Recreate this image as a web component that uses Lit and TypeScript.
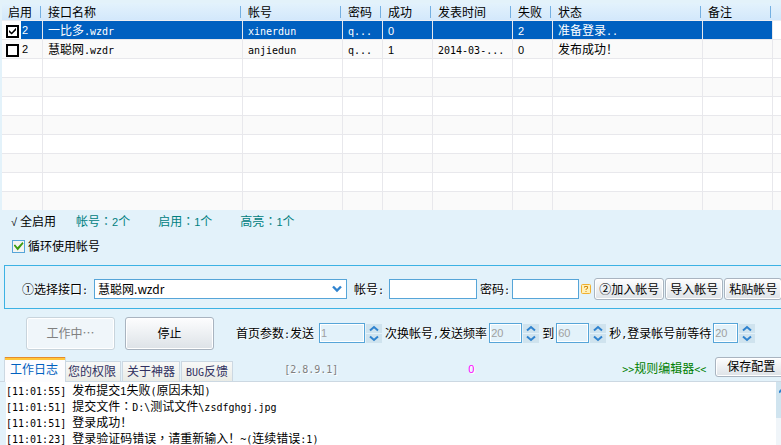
import { LitElement, html, css, svg } from "lit";
import { customElement, property } from "lit/decorators.js";

const textStyles = css`
  .latin {
    font-family: "DejaVu Sans Mono", "Liberation Mono", monospace;
    font-size: 10px;
    line-height: 10px;
  }
  .digits {
    font-family: "Liberation Sans", Arial, sans-serif;
    font-size: 11px;
    line-height: 10px;
  }
  .wide {
    font-family: "Noto Sans CJK TC", sans-serif;
    line-height: 10px;
  }
`;

/** Splits mixed text so that half-width runs take a half-em wide face. */
function mixed(text: string) {
  const runs = text.match(/[\x20-\x7e]+|[：，]+|[^\x20-\x7e：，]+/g) ?? [];
  return runs.map((run) => {
    if (/^\d+$/.test(run)) return html`<span class="digits">${run}</span>`;
    if (/^[\x20-\x7e]/.test(run)) return html`<span class="latin">${run}</span>`;
    if (/^[：，]/.test(run)) return html`<span class="wide">${run}</span>`;
    return html`${run}`;
  });
}

interface Account {
  on: boolean;
  cells: string[];
}

const columns = ["启用", "接口名称", "帐号", "密码", "成功", "发表时间", "失败", "状态", "备注", ""];
const accounts: Account[] = [
  { on: true, cells: ["一比多.wzdr", "xinerdun", "q...", "0", "", "2", "准备登录..", "", ""] },
  { on: false, cells: ["慧聪网.wzdr", "anjiedun", "q...", "1", "2014-03-...", "0", "发布成功！", "", ""] },
];
const emptyRows = Array.from({ length: 8 });
const logLines = [
  "[11:01:55] 发布提交1失败(原因未知)",
  "[11:01:51] 提交文件：D:\\测试文件\\zsdfghgj.jpg",
  "[11:01:51] 登录成功！",
  "[11:01:23] 登录验证码错误，请重新输入！~(连续错误:1)",
];

@customElement("account-table")
export class AccountTable extends LitElement {
  static styles = [
    textStyles,
    css`
      :host {
        display: block;
      }
      .grid {
        width: 100%;
        table-layout: fixed;
        border-collapse: separate;
        border-spacing: 0;
      }
      .w-check { width: 41px; }
      .w-name { width: 200px; }
      .w-user { width: 100px; }
      .w-narrow { width: 40px; }
      .w-ok { width: 50px; }
      .w-time { width: 80px; }
      .w-state { width: 150px; }
      .w-note { width: 70px; }
      th,
      td {
        box-sizing: border-box;
        padding: 0 0 0 5px;
        text-align: left;
        font-weight: 400;
        white-space: nowrap;
        overflow: hidden;
      }
      th {
        height: 18px;
        line-height: 16px;
        border-bottom: 1px solid #eceef2;
        background:
          linear-gradient(#74b0e2, #74b0e2) right 2px center / 1px 12px no-repeat,
          linear-gradient(#e3f2fc, #d3e8fb);
      }
      th:first-child {
        padding-left: 6px;
      }
      th:last-child {
        background: linear-gradient(#e3f2fc, #d3e8fb);
      }
      td {
        height: 19px;
        line-height: 18px;
        border-right: 1px solid #e8e8ec;
        border-bottom: 1px solid #e8e8ec;
        background: #fff;
      }
      tr:nth-child(even) td {
        background: #fafafa;
      }
      tr:last-child td {
        height: 18px;
        border-bottom: 0;
      }
      td:last-child {
        border-right: 0;
      }
      .picked td {
        background: #0060c0;
        color: #fff;
      }
      .picked td:first-child {
        background: linear-gradient(90deg, #fff 19px, #0060c0 19px);
      }
      .picked td:last-child {
        background: #fff;
      }
      .enable {
        display: flex;
        align-items: center;
        gap: 3px;
        height: 18px;
        margin-left: -1px;
      }
      .tick {
        appearance: none;
        box-sizing: border-box;
        width: 13px;
        height: 13px;
        margin: 2px 0 0;
        border: 2px solid #000;
        background: #fff;
        display: grid;
        place-items: center;
      }
      .tick:checked::before {
        content: "";
        width: 7px;
        height: 7px;
        background: #000;
        clip-path: polygon(0 35%, 38% 70%, 100% 5%, 100% 38%, 38% 100%, 0 68%);
      }
    `,
  ];

  render() {
    return html`
      <table class="grid">
        <colgroup>
          <col class="w-check" /><col class="w-name" /><col class="w-user" />
          <col class="w-narrow" /><col class="w-ok" /><col class="w-time" />
          <col class="w-narrow" /><col class="w-state" /><col class="w-note" /><col />
        </colgroup>
        <thead>
          <tr>${columns.map((c) => html`<th scope="col">${c}</th>`)}</tr>
        </thead>
        <tbody>
          ${accounts.map(
            (a, i) => html`
              <tr class=${i === 0 ? "picked" : ""}>
                <td>
                  <label class="enable">
                    <input class="tick" type="checkbox" .checked=${a.on} />${mixed("2")}
                  </label>
                </td>
                ${a.cells.map((c) => html`<td>${mixed(c)}</td>`)}
              </tr>
            `
          )}
          ${emptyRows.map(() => html`<tr>${columns.map(() => html`<td></td>`)}</tr>`)}
        </tbody>
      </table>
    `;
  }
}

@customElement("number-box")
export class NumberBox extends LitElement {
  @property() value = "";
  @property() label = "";
  @property() size = "medium";

  static styles = css`
    :host {
      display: flex;
      flex: none;
      align-items: center;
      gap: 1px;
    }
    .box {
      appearance: textfield;
      box-sizing: border-box;
      height: 20px;
      margin: 0;
      padding: 0 1px;
      border: 1px solid #56a5d8;
      border-radius: 0;
      box-shadow: inset 0 0 0 1px #fff;
      background: #e3f2fa;
      color: #a0a0a0;
      font: 11px "Liberation Sans", Arial, sans-serif;
    }
    .box::-webkit-inner-spin-button {
      display: none;
    }
    .large { width: 46px; }
    .medium { width: 33px; }
    .small { width: 25px; }
    .steps {
      display: grid;
      gap: 1px;
    }
    .step {
      display: grid;
      place-items: center;
      width: 16px;
      height: 9px;
      padding: 0;
      border: 0;
      background: #cfe3ee;
    }
  `;

  render() {
    return html`
      <input class="box ${this.size}" type="number" disabled aria-label=${this.label} .value=${this.value} />
      <span class="steps">
        <button class="step" aria-label="增加">
          <svg width="10" height="7" viewBox="0 0 10 7">
            ${svg`<path d="M1 5.5 5 2 9 5.5" fill="none" stroke="#2f83cf" stroke-width="2" />`}
          </svg>
        </button>
        <button class="step" aria-label="减少">
          <svg width="10" height="7" viewBox="0 0 10 7">
            ${svg`<path d="M1 1.5 5 5 9 1.5" fill="none" stroke="#2f83cf" stroke-width="2" />`}
          </svg>
        </button>
      </span>
    `;
  }
}

@customElement("app-root")
export class AppRoot extends LitElement {
  static styles = [
    textStyles,
    css`
      :host {
        display: flex;
        flex-direction: column;
        box-sizing: border-box;
        height: 100vh;
        padding-top: 3px;
        overflow: hidden;
        background: #e3f2fa;
        color: #000;
        font: 12px/16px "Noto Sans CJK SC", sans-serif;
        white-space: nowrap;
      }
      account-table {
        flex: none;
        margin-left: 2px;
      }
      .row {
        display: flex;
        flex: none;
        align-items: center;
      }
      .row > * {
        flex: none;
      }
      .shade {
        text-shadow: 1px 1px 0 #fff;
      }
      .stats {
        height: 22px;
        padding-left: 8px;
        gap: 28px;
        color: #008080;
      }
      .all {
        margin-right: -8px;
        padding: 0;
        border: 0;
        background: none;
        color: #000;
        font: inherit;
      }
      .root {
        display: inline-block;
        width: 12px;
        text-align: center;
        font-family: "Liberation Sans", sans-serif;
        font-size: 11px;
        line-height: 10px;
      }
      .loop {
        height: 28px;
        padding-left: 12px;
        gap: 3px;
      }
      .tick {
        appearance: none;
        box-sizing: border-box;
        width: 13px;
        height: 13px;
        margin: 0;
        border: 1px solid #56a5d8;
        background: #f4f4f2;
        display: grid;
        place-items: center;
      }
      .tick:checked::before {
        content: "";
        width: 10px;
        height: 9px;
        background: #3c9c10;
        clip-path: polygon(0 42%, 16% 34%, 40% 64%, 90% 6%, 100% 22%, 42% 100%);
      }
      .group {
        box-sizing: border-box;
        height: 44px;
        margin: 5px 0 0 4px;
        padding: 4px 0 0 17px;
        border: 1px solid #3cb2e4;
        border-right: 0;
      }
      .field {
        box-sizing: border-box;
        height: 20px;
        margin: 0;
        border: 1px solid #56a5d8;
        border-radius: 0;
        background: #fff;
        padding: 0 3px;
        color: #000;
        font: inherit;
      }
      .picker {
        display: grid;
        width: 253px;
        margin: 0 7px 0 6px;
      }
      .picker > * {
        grid-area: 1 / 1;
      }
      .choice {
        appearance: none;
        width: 100%;
      }
      .arrow {
        place-self: center end;
        margin-right: 5px;
        pointer-events: none;
      }
      .user {
        width: 88px;
        margin: 0 3px 0 5px;
      }
      .secret {
        width: 67px;
        margin: 0 2px;
      }
      .help {
        width: 10px;
        height: 10px;
        margin-right: 3px;
        padding: 0;
        border: 0;
        background: none;
        display: grid;
      }
      .btn {
        box-sizing: border-box;
        height: 22px;
        padding: 0 4px;
        border: 1px solid #a9b4c0;
        border-radius: 3px;
        background: linear-gradient(#fdfdfe, #edf0f3 50%, #dde2e7);
        box-shadow: inset 0 0 0 1px #fff;
        color: #000;
        font: inherit;
        line-height: 16px;
      }
      .group .btn {
        margin-right: 1px;
      }
      .tools {
        height: 48px;
        padding-left: 26px;
      }
      .tools .btn {
        width: 89px;
        height: 33px;
        margin-right: 10px;
      }
      .tools .btn:disabled {
        border-color: #c8d4dc;
        background: #f0f6fa;
        color: #808080;
      }
      .lead {
        margin: 0 5px 0 12px;
      }
      .mid {
        margin: 0 2px 0 3px;
      }
      .tabbar {
        height: 25px;
        padding-left: 4px;
        align-items: flex-end;
        box-shadow: inset 0 -1px 0 #ccd8e2;
      }
      .tab {
        box-sizing: border-box;
        height: 21px;
        margin-right: 1px;
        padding: 0 4px 2px;
        border: 1px solid #ccd8e2;
        background: linear-gradient(#f8f9f8, #e9ebe6);
        color: #303060;
        font: inherit;
        line-height: 16px;
      }
      .tab.active {
        height: 25px;
        margin-right: 0;
        padding: 0 7px 2px 5px;
        border-width: 0 1px;
        background: linear-gradient(#e68b2c 1px, #ffc73c 1px, #ffc73c 3px, #fcfcfe 3px);
        color: #0060c0;
      }
      .tab.active + .tab {
        border-left: 0;
        padding-left: 2px;
      }
      .note {
        height: 25px;
        line-height: 22px;
        align-self: center;
      }
      .version {
        width: 184px;
        margin-left: 50px;
        color: #808080;
      }
      .count {
        width: 154px;
        color: #ff00ff;
      }
      .editor {
        margin-right: 9px;
        color: #008000;
        text-decoration: none;
      }
      .save {
        align-self: flex-start;
        height: 20px;
        padding: 0 11px 2px;
        line-height: 16px;
      }
      .log {
        display: flex;
        flex: 1;
        min-height: 0;
        margin-left: 6px;
        background: #fff;
        overflow: hidden;
      }
      .lines {
        flex: 1;
        margin: 0;
        padding: 0;
        list-style: none;
      }
      .lines li {
        white-space: pre;
      }
      .rail {
        width: 5px;
        overflow: hidden;
        background: #f0f5f9;
      }
      .thumb {
        height: 36px;
        padding: 5px 0 0 3px;
        box-sizing: border-box;
        background: #d0e4ef;
      }
      .up {
        display: block;
      }
    `,
  ];

  render() {
    return html`
      <account-table></account-table>
      <div class="row stats">
        <button class="all"><span class="root">√</span>全启用</button>
        <span>${mixed("帐号：2个")}</span>
        <span>${mixed("启用：1个")}</span>
        <span>${mixed("高亮：1个")}</span>
      </div>
      <label class="row loop"><input class="tick" type="checkbox" checked />循环使用帐号</label>

      <div class="row group">
        <label class="shade" for="api">${mixed("①选择接口:")}</label>
        <span class="picker">
          <select class="field choice" id="api"><option>慧聪网.wzdr</option></select>
          <svg class="arrow" width="10" height="8" viewBox="0 0 10 8">
            <path d="M1 1.5 5 5.5 9 1.5" fill="none" stroke="#2f83cf" stroke-width="2.4" />
          </svg>
        </span>
        <label class="shade" for="user">${mixed("帐号:")}</label>
        <input class="field user" id="user" type="text" />
        <label class="shade" for="secret">${mixed("密码:")}</label>
        <input class="field secret" id="secret" type="text" />
        <button class="help" aria-label="帮助">
          <svg width="10" height="10" viewBox="0 0 10 10">
            <rect x=".5" y=".5" width="9" height="9" rx="1" fill="#fff0b8" stroke="#f0b030" />
            <path d="M3.5 3.6V2.5h3v2L5 5.2V6M5 7v1" fill="none" stroke="#d08a10" />
          </svg>
        </button>
        <button class="btn">②加入帐号</button>
        <button class="btn">导入帐号</button>
        <button class="btn">粘贴帐号</button>
      </div>

      <div class="row tools">
        <button class="btn" disabled>工作中…</button>
        <button class="btn">停止</button>
        <span class="shade lead">${mixed("首页参数:发送")}</span>
        <number-box size="large" value="1" label="发送"></number-box>
        <span class="shade mid">${mixed("次换帐号,发送频率")}</span>
        <number-box value="20" label="发送频率"></number-box>
        <span class="shade mid">到</span>
        <number-box value="60" label="到"></number-box>
        <span class="shade mid">${mixed("秒,登录帐号前等待")}</span>
        <number-box size="small" value="20" label="登录帐号前等待"></number-box>
      </div>

      <div class="row tabbar">
        <button class="tab active">工作日志</button>
        <button class="tab">您的权限</button>
        <button class="tab">关于神器</button>
        <button class="tab">${mixed("BUG反馈")}</button>
        <span class="note shade version">${mixed("[2.8.9.1]")}</span>
        <span class="note shade count">${mixed("0")}</span>
        <a class="note editor" href="#editor">${mixed(">>规则编辑器<<")}</a>
        <button class="btn save">保存配置</button>
      </div>

      <div class="log">
        <ul class="lines">
          ${logLines.map((l) => html`<li>${mixed(l)}</li>`)}
        </ul>
        <div class="rail">
          <div class="thumb">
            <svg class="up" width="10" height="7" viewBox="0 0 10 7">
              <path d="M0 5.5 4 1.5 8 5.5" fill="none" stroke="#2f83cf" stroke-width="2" />
            </svg>
          </div>
        </div>
      </div>
    `;
  }
}
